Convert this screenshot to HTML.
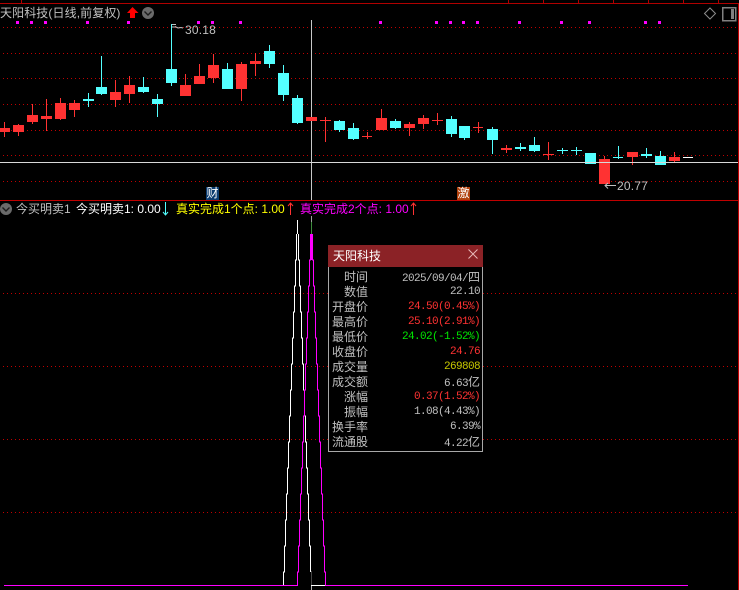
<!DOCTYPE html>
<html>
<head>
<meta charset="utf-8">
<style>
html,body{margin:0;padding:0;background:#000;}
body{width:739px;height:590px;position:relative;overflow:hidden;font-family:"Liberation Sans","WenQuanYi Zen Hei","Noto Sans CJK SC",sans-serif;font-size:12px;color:#c0c0c0;}
svg{position:absolute;left:0;top:0;}
.t{position:absolute;white-space:nowrap;line-height:15px;height:15px;}
.pop{position:absolute;left:328px;top:245px;width:153px;height:206px;background:#000;border:1px solid #a8a8a8;border-top:none;}
.head{position:absolute;left:-1px;top:0;width:155px;height:22px;background:#8b2226;color:#fff;line-height:22px;}
.head span{position:absolute;left:5px;top:0;}
.l{position:absolute;left:0;width:39px;text-align:right;line-height:15px;height:15px;color:#c0c0c0;white-space:nowrap;}
.v{position:absolute;left:40px;width:111px;text-align:right;line-height:15px;height:15px;color:#c0c0c0;white-space:nowrap;font-family:"Liberation Mono","WenQuanYi Zen Hei","Noto Sans CJK SC",monospace;font-size:11px;letter-spacing:-.6px;}
.v b{font-weight:400;font-size:12px;letter-spacing:0;font-family:"Liberation Sans","WenQuanYi Zen Hei","Noto Sans CJK SC",sans-serif;}
.r{color:#ff3232}.g{color:#00e600}.y{color:#c8c800}
.badge{position:absolute;width:13px;height:13px;line-height:13px;text-align:center;color:#fff;font-size:12px;}
</style>
</head>
<body>
<svg width="739" height="590" viewBox="0 0 739 590" shape-rendering="crispEdges">
<defs><pattern id="d" x="3" y="0" width="4" height="1" patternUnits="userSpaceOnUse"><rect x="0" y="0" width="1" height="1" fill="#c00000"/></pattern></defs>
<!-- frame -->
<rect x="0" y="3" width="739" height="1" fill="#b00000"/>
<g fill="#b00000">
<rect x="21" y="0" width="1" height="3"/><rect x="508" y="0" width="1" height="3"/><rect x="543" y="0" width="1" height="3"/><rect x="578" y="0" width="1" height="3"/><rect x="613" y="0" width="1" height="3"/><rect x="648" y="0" width="1" height="3"/><rect x="683" y="0" width="1" height="3"/><rect x="718" y="0" width="1" height="3"/>
</g>
<rect x="738" y="3" width="1" height="587" fill="#c00000"/>
<rect x="0" y="200" width="739" height="1" fill="#c00000"/>
<!-- grid -->
<g fill="url(#d)">
<rect x="3" y="27" width="735" height="1"/><rect x="3" y="53" width="735" height="1"/><rect x="3" y="78" width="735" height="1"/><rect x="3" y="104" width="735" height="1"/><rect x="3" y="130" width="735" height="1"/><rect x="3" y="155" width="735" height="1"/><rect x="3" y="181" width="735" height="1"/>
<rect x="3" y="293" width="735" height="1"/><rect x="3" y="366" width="735" height="1"/><rect x="3" y="439" width="735" height="1"/><rect x="3" y="512" width="735" height="1"/>
</g>
<!-- magenta squares -->
<g fill="#ff00ff">
<rect x="16" y="21" width="3" height="3"/><rect x="30" y="21" width="3" height="3"/><rect x="44" y="21" width="3" height="3"/><rect x="86" y="21" width="3" height="3"/><rect x="127" y="21" width="3" height="3"/><rect x="197" y="21" width="3" height="3"/><rect x="211" y="21" width="3" height="3"/><rect x="239" y="21" width="3" height="3"/><rect x="379" y="21" width="3" height="3"/><rect x="435" y="21" width="3" height="3"/><rect x="449" y="21" width="3" height="3"/><rect x="462" y="21" width="3" height="3"/><rect x="476" y="21" width="3" height="3"/><rect x="518" y="21" width="3" height="3"/><rect x="560" y="21" width="3" height="3"/><rect x="588" y="21" width="3" height="3"/><rect x="644" y="21" width="3" height="3"/><rect x="658" y="21" width="3" height="3"/>
</g>
<!-- crosshair -->
<rect x="311" y="20" width="1" height="180" fill="#c8c8c8"/>
<!-- red candles -->
<g fill="#ff3232">
<rect x="4" y="122" width="1" height="15"/><rect x="-1" y="128" width="11" height="4"/>
<rect x="18" y="124" width="1" height="12"/><rect x="13" y="125" width="11" height="7"/>
<rect x="32" y="104" width="1" height="20"/><rect x="27" y="115" width="11" height="7"/>
<rect x="46" y="99" width="1" height="32"/><rect x="41" y="116" width="11" height="3"/>
<rect x="60" y="98" width="1" height="22"/><rect x="55" y="103" width="11" height="16"/>
<rect x="74" y="100" width="1" height="17"/><rect x="69" y="103" width="11" height="7"/>
<rect x="115" y="80" width="1" height="27"/><rect x="110" y="92" width="11" height="8"/>
<rect x="129" y="76" width="1" height="27"/><rect x="124" y="85" width="11" height="9"/>
<rect x="185" y="74" width="1" height="22"/><rect x="180" y="85" width="11" height="11"/>
<rect x="199" y="64" width="1" height="20"/><rect x="194" y="76" width="11" height="8"/>
<rect x="213" y="54" width="1" height="29"/><rect x="208" y="65" width="11" height="13"/>
<rect x="241" y="62" width="1" height="39"/><rect x="236" y="64" width="11" height="25"/>
<rect x="255" y="53" width="1" height="23"/><rect x="250" y="61" width="11" height="3"/>
<rect x="306" y="117" width="11" height="4"/>
<rect x="325" y="117" width="1" height="25"/><rect x="320" y="120" width="11" height="1"/>
<rect x="367" y="132" width="1" height="7"/><rect x="362" y="136" width="10" height="1"/>
<rect x="381" y="109" width="1" height="21"/><rect x="376" y="118" width="11" height="12"/>
<rect x="409" y="122" width="1" height="14"/><rect x="404" y="124" width="11" height="4"/>
<rect x="423" y="115" width="1" height="14"/><rect x="418" y="118" width="11" height="6"/>
<rect x="437" y="113" width="1" height="12"/><rect x="432" y="120" width="11" height="1"/>
<rect x="478" y="122" width="1" height="11"/><rect x="473" y="127" width="10" height="1"/>
<rect x="506" y="145" width="1" height="8"/><rect x="501" y="148" width="11" height="2"/>
<rect x="548" y="142" width="1" height="18"/><rect x="543" y="154" width="11" height="1"/>
<rect x="604" y="156" width="1" height="4"/><rect x="599" y="159" width="11" height="25"/>
<rect x="632" y="152" width="1" height="13"/><rect x="627" y="152" width="11" height="5"/>
<rect x="674" y="152" width="1" height="10"/><rect x="669" y="157" width="11" height="4"/>
</g>
<!-- cyan candles -->
<g fill="#54ffff">
<rect x="88" y="93" width="1" height="14"/><rect x="83" y="99" width="11" height="2"/>
<rect x="101" y="56" width="1" height="39"/><rect x="96" y="87" width="11" height="7"/>
<rect x="143" y="77" width="1" height="16"/><rect x="138" y="87" width="11" height="5"/>
<rect x="157" y="94" width="1" height="23"/><rect x="152" y="99" width="11" height="5"/>
<rect x="171" y="24" width="1" height="62"/><rect x="166" y="69" width="11" height="14"/>
<rect x="227" y="63" width="1" height="26"/><rect x="222" y="69" width="11" height="20"/>
<rect x="269" y="45" width="1" height="23"/><rect x="264" y="51" width="11" height="13"/>
<rect x="283" y="65" width="1" height="36"/><rect x="278" y="73" width="11" height="22"/>
<rect x="297" y="95" width="1" height="29"/><rect x="292" y="98" width="11" height="25"/>
<rect x="339" y="120" width="1" height="12"/><rect x="334" y="121" width="11" height="9"/>
<rect x="353" y="123" width="1" height="17"/><rect x="348" y="128" width="11" height="11"/>
<rect x="395" y="119" width="1" height="10"/><rect x="390" y="121" width="11" height="7"/>
<rect x="451" y="116" width="1" height="21"/><rect x="446" y="119" width="11" height="15"/>
<rect x="464" y="126" width="1" height="14"/><rect x="459" y="126" width="11" height="12"/>
<rect x="492" y="127" width="1" height="27"/><rect x="487" y="129" width="11" height="11"/>
<rect x="520" y="143" width="1" height="8"/><rect x="515" y="147" width="11" height="2"/>
<rect x="534" y="137" width="1" height="15"/><rect x="529" y="145" width="11" height="6"/>
<rect x="562" y="148" width="1" height="6"/><rect x="557" y="150" width="11" height="1"/>
<rect x="576" y="147" width="1" height="8"/><rect x="571" y="150" width="11" height="1"/>
<rect x="585" y="153" width="11" height="11"/>
<rect x="618" y="146" width="1" height="13"/><rect x="613" y="157" width="10" height="1"/>
<rect x="646" y="148" width="1" height="10"/><rect x="641" y="154" width="11" height="2"/>
<rect x="660" y="151" width="1" height="5"/><rect x="655" y="156" width="11" height="9"/>
</g>
<rect x="683" y="157" width="10" height="1" fill="#fff"/>
<rect x="0" y="162" width="738" height="1" fill="#d8d8d8"/>
<!-- title row lower crosshair bits -->
<rect x="311" y="216" width="1" height="6" fill="#a0a0a0"/>
<rect x="311" y="222" width="1" height="12" fill="#3c8c3c"/>
<rect x="311" y="571" width="1" height="14" fill="#444"/>
<rect x="311" y="586" width="1" height="4" fill="#b0b0b0"/>
<!-- white pyramid -->
<path shape-rendering="crispEdges" fill="none" stroke="#fff" stroke-width="1" d="M297.5 220V234M296.5 234V260H295.5V286H294.5V312H293.5V338H292.5V364H291.5V390H290.5V416H289.5V442H288.5V468H287.5V494H286.5V520H285.5V546H284.5V572H283.5V585M298.5 234V260H299.5V286H300.5V312H301.5V338H302.5V364H303.5V390H304.5V416H305.5V442H306.5V468H307.5V494H308.5V520H309.5V546H310.5V572M311 585.5H325"/>
<!-- magenta pyramid -->
<path shape-rendering="crispEdges" fill="none" stroke="#ff00ff" stroke-width="1" d="M310.5 234V260H309.5V286H308.5V312H307.5V338H306.5V364H305.5V390H304.5V416H303.5V442H302.5V468H301.5V494H300.5V520H299.5V546H298.5V572H297.5V585.5H4M312.5 234V260H313.5V286H314.5V312H315.5V338H316.5V364H317.5V390H318.5V416H319.5V442H320.5V468H321.5V494H322.5V520H323.5V546H324.5V572H325.5V585.5H688"/>
<rect x="311" y="234" width="1" height="26" fill="#ff00ff"/>
<!-- up arrow -->
<path fill="#ff0000" d="M132.5 7 L138.5 13 H135 V18 H130 V13 H127 Z" shape-rendering="auto"/>
<!-- circles -->
<g shape-rendering="auto">
<circle cx="148" cy="13" r="6" fill="#6a6a6a"/>
<path d="M144.500 11.500 L148 15 L151.500 11.500" fill="none" stroke="#1c1c1c" stroke-width="1.4"/>
<circle cx="6" cy="209" r="6" fill="#6a6a6a"/>
<path d="M2.500 207.500 L6 211 L9.500 207.500" fill="none" stroke="#1c1c1c" stroke-width="1.4"/>
<!-- diamond -->
<path d="M710 8 L715.500 13.500 L710 19 L704.500 13.500 Z" fill="none" stroke="#8c8c8c" stroke-width="1"/>
</g>
<!-- panel icon -->
<rect x="722.500" y="7.500" width="13" height="13" fill="none" stroke="#808080" stroke-width="1.500"/>
<rect x="731" y="9" width="3" height="10" fill="#808080"/>
<!-- high/low markers -->
<path shape-rendering="auto" fill="none" stroke="#c0c0c0" stroke-width="1" d="M172 24.500H176M172 27H175M175 26.500L178 28L181 27.500L183 28"/>
<path shape-rendering="auto" fill="none" stroke="#c0c0c0" stroke-width="1" d="M605 185.500H616M608 183L605 185.500L608 188.500"/>
<!-- text arrows -->
<g shape-rendering="auto" fill="none" stroke-width="1">
<path stroke="#54ffff" d="M165.500 202V215M163 212L165.500 215L168 212"/>
<path stroke="#ff3232" d="M290.500 203V215M288 206L290.500 203L293 206"/>
<path stroke="#ff3232" d="M413.500 203V215M411 206L413.500 203L416 206"/>
</g>
</svg>

<div class="t" style="left:0;top:6px;color:#c0c0c0;letter-spacing:.1px;">天阳科技(日线,前复权)</div>
<div class="t" style="left:185px;top:23px;color:#c0c0c0;letter-spacing:.2px;">30.18</div>
<div class="t" style="left:617px;top:179px;color:#c0c0c0;letter-spacing:.2px;">20.77</div>
<div class="badge" style="left:206px;top:187px;background:#0c3c70;">财</div>
<div class="badge" style="left:457px;top:187px;background:#b0400c;">激</div>

<div class="t" style="left:16px;top:202px;color:#c0c0c0;">今买明卖1</div>
<div class="t" style="left:76px;top:202px;color:#fff;">今买明卖1: 0.00</div>
<div class="t" style="left:176px;top:202px;color:#ffff00;">真实完成1个点: 1.00</div>
<div class="t" style="left:300px;top:202px;color:#ff00ff;">真实完成2个点: 1.00</div>

<div class="pop">
  <div class="head"><span>天阳科技</span>
    <svg width="155" height="22" style="left:0;top:0"><path d="M140.500 4.500L149.500 13.500M149.500 4.500L140.500 13.500" stroke="#e8b8b8" stroke-width="1" fill="none"/></svg>
  </div>
  <div class="l" style="top:25px;">时间</div><div class="v" style="top:25px;">2025/09/04/<b>四</b></div>
  <div class="l" style="top:40px;">数值</div><div class="v" style="top:40px;">22.10</div>
  <div class="l" style="top:55px;">开盘价</div><div class="v r" style="top:55px;">24.50(0.45%)</div>
  <div class="l" style="top:70px;">最高价</div><div class="v r" style="top:70px;">25.10(2.91%)</div>
  <div class="l" style="top:85px;">最低价</div><div class="v g" style="top:85px;">24.02(-1.52%)</div>
  <div class="l" style="top:100px;">收盘价</div><div class="v r" style="top:100px;">24.76</div>
  <div class="l" style="top:115px;">成交量</div><div class="v y" style="top:115px;">269808</div>
  <div class="l" style="top:130px;">成交额</div><div class="v" style="top:130px;">6.63<b>亿</b></div>
  <div class="l" style="top:145px;">涨幅</div><div class="v r" style="top:145px;">0.37(1.52%)</div>
  <div class="l" style="top:160px;">振幅</div><div class="v" style="top:160px;">1.08(4.43%)</div>
  <div class="l" style="top:175px;">换手率</div><div class="v" style="top:175px;">6.39%</div>
  <div class="l" style="top:190px;">流通股</div><div class="v" style="top:190px;">4.22<b>亿</b></div>
</div>
</body>
</html>
